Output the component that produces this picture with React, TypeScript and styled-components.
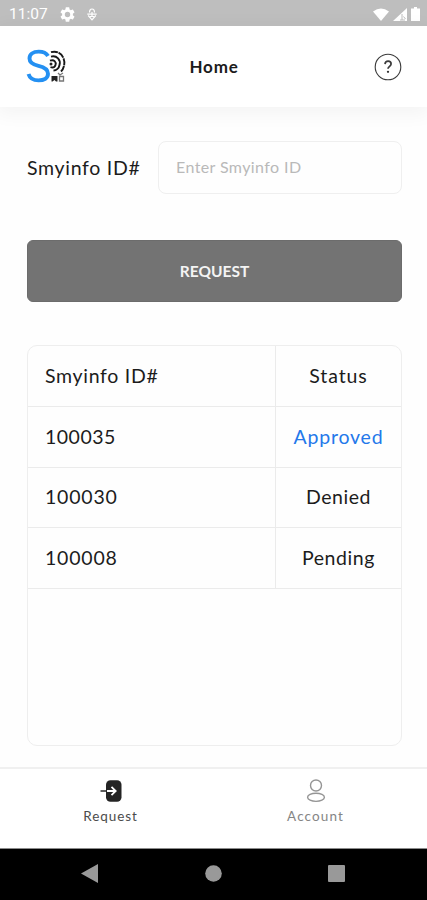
import React from "react";
import styled, { createGlobalStyle } from "styled-components";

const GlobalStyle = createGlobalStyle`
  * { box-sizing: border-box; }
  body { margin: 0; background: #fefefe; }
`;

const Screen = styled.div`
  width: 427px;
  height: 900px;
  display: flex;
  flex-direction: column;
  overflow: hidden;
  background: #fefefe;
  color: #1c1c1c;
  font-family: Lato, "Open Sans", sans-serif;
`;

const StatusBar = styled.div`
  height: 26px;
  flex: none;
  display: flex;
  align-items: center;
  justify-content: space-between;
  padding: 2px 7px 0 9px;
  background: #bebebe;
  color: #fff;
  font: 400 15.5px/24px Roboto, sans-serif;
`;

const StatusGroup = styled.div<{ $gap: number }>`
  display: flex;
  align-items: center;
  gap: ${(p) => p.$gap}px;
  svg { display: block; }
`;

const Header = styled.header`
  height: 81px;
  flex: none;
  display: grid;
  grid-template-columns: 1fr auto 1fr;
  align-items: center;
  padding: 0 25px 0 26px;
  background: #fff;
  box-shadow: 0 4px 18px 3px rgba(0, 0, 0, 0.045);
  svg { display: block; }
`;

const Title = styled.h1`
  margin: 0;
  font-size: 17px;
  line-height: 24px;
  font-weight: 700;
  letter-spacing: 0.8px;
`;

const HelpButton = styled.button`
  justify-self: end;
  border: 0;
  padding: 0;
  background: none;
`;

const Main = styled.main`
  flex: 1;
  display: flex;
  flex-direction: column;
  padding: 34px 25px 21px 27px;
`;

const Field = styled.label`
  display: flex;
  align-items: center;
  justify-content: space-between;
  height: 53px;
`;

const Text = styled.span<{ $spacing?: number; $blue?: boolean }>`
  font-size: 19.5px;
  line-height: 26px;
  white-space: nowrap;
  letter-spacing: ${(p) => p.$spacing ?? 0.5}px;
  color: ${(p) => (p.$blue ? "#2478ea" : "inherit")};
`;

const Input = styled.input`
  width: 244px;
  height: 53px;
  padding: 0 17px 2px;
  border: 1.5px solid #efefef;
  border-radius: 8px;
  background: #fefefe;
  outline: none;
  font: 400 16px Lato, sans-serif;
  letter-spacing: 0.4px;
  &::placeholder { color: #b9b9b9; opacity: 1; }
`;

const RequestButton = styled.button`
  height: 62px;
  margin-top: 46px;
  border: 1px solid #6c6c6c;
  border-radius: 6px;
  background: #737373;
  color: #f4f4f4;
  font: 700 15.5px Lato, sans-serif;
  letter-spacing: 0;
`;

const Table = styled.div`
  flex: 1;
  margin-top: 43px;
  border: 1.5px solid #eeeeee;
  border-radius: 10px;
`;

const Row = styled.div`
  display: grid;
  grid-template-columns: 247px 1fr;
  height: 60.75px;
  border-bottom: 1.5px solid #ebebeb;
`;

const Cell = styled.div<{ $status?: boolean }>`
  display: flex;
  align-items: center;
  justify-content: ${(p) => (p.$status ? "center" : "flex-start")};
  padding-left: ${(p) => (p.$status ? 0 : 17)}px;
  border-left: ${(p) => (p.$status ? "1.5px solid #ebebeb" : "0")};
`;

const Tabs = styled.nav`
  height: 81px;
  flex: none;
  display: grid;
  grid-template-columns: 221px 189px;
  border-top: 2px solid #f0f0f0;
  background: #fff;
`;

const Tab = styled.div<{ $active?: boolean; $spacing: number }>`
  display: flex;
  flex-direction: column;
  align-items: center;
  padding-top: 9px;
  gap: 3px;
  color: ${(p) => (p.$active ? "#4b4b4b" : "#858585")};
  font-size: 13.5px;
  line-height: 18px;
  letter-spacing: ${(p) => p.$spacing}px;
`;

const SystemNav = styled.div`
  height: 52px;
  flex: none;
  display: flex;
  align-items: center;
  justify-content: space-between;
  padding: 0 82px 2px 81px;
  border-top: 1px solid #8b8b8b;
  background: #000;
`;

const Logo = () => (
  <svg width="40" height="38" viewBox="0 0 40 38" fill="none">
    <path d="M22 8C20 4.5 17 3.6 12.7 3.6C7 3.6 3.5 6.4 3.5 10.5C3.5 15 7 16.6 12.5 17.8C18.5 19.1 22 21 22 25.8C22 30.2 18 32.4 12.5 32.4C7.2 32.4 3.8 30.4 2.5 26" stroke="#2490f2" strokeWidth="3.9" />
    <g stroke="#171717" strokeWidth="1.9">
      <path d="M25 4.2C34 1.5 40 10 38 18C37.5 20 36.5 22 35 23.5" strokeDasharray="7 .7" />
      <path d="M25 8.6C31 7.2 35 12 33.5 17C33 20 30.5 22.5 27.5 22.5" />
      <path d="M24 12.7C28 11 30.5 14 29.5 17C28.8 19 27 20 24.5 19.2" />
    </g>
    <circle cx="25" cy="16" r="1.5" fill="#222" />
    <path d="M25.5 28H31.5V33.5H30L28.5 32L26.5 33.5H25.5Z" fill="#222" />
    <path d="M32 25l2 2 3-2M33.5 28.5h4v4.5h-4z" stroke="#777" strokeWidth="1.3" />
  </svg>
);

const HelpIcon = () => (
  <svg width="28" height="28" viewBox="0 0 28 28" fill="none" stroke="#3b3b3b">
    <circle cx="14" cy="14" r="12.8" strokeWidth="1.1" />
    <path d="M11 11.1C11.2 9.1 12.4 8.2 14.1 8.2C15.9 8.2 17.1 9.3 17.1 10.9C17.1 13.2 14 13.4 14 15.8" strokeWidth="1.7" />
    <circle cx="14" cy="18.8" r="1.15" fill="#333" stroke="none" />
  </svg>
);

const GearIcon = () => (
  <svg width="15" height="15" viewBox="2 2 20 20" fill="#fff">
    <path d="M19.14 12.94c.04-.3.06-.61.06-.94s-.02-.64-.07-.94l2.03-1.58a.5.5 0 0 0 .12-.61l-1.92-3.32a.5.5 0 0 0-.59-.22l-2.39.96a7 7 0 0 0-1.62-.94l-.36-2.54a.5.5 0 0 0-.48-.41h-3.84a.5.5 0 0 0-.47.41l-.36 2.54a7 7 0 0 0-1.62.94l-2.39-.96a.5.5 0 0 0-.59.22L2.74 8.87a.5.5 0 0 0 .12.61l2.03 1.58a6 6 0 0 0 0 1.88l-2.03 1.58a.5.5 0 0 0-.12.61l1.92 3.32c.12.22.37.29.59.22l2.39-.96c.5.38 1.03.7 1.62.94l.36 2.54c.05.24.24.41.48.41h3.84c.24 0 .44-.17.47-.41l.36-2.54a7 7 0 0 0 1.62-.94l2.39.96c.22.08.47 0 .59-.22l1.92-3.32a.5.5 0 0 0-.12-.61zM12 15.6a3.6 3.6 0 1 1 0-7.2 3.6 3.6 0 0 1 0 7.2z" />
  </svg>
);

const records = [
  { id: "100035", status: "Approved", idSpacing: 0.5, spacing: 0.8 },
  { id: "100030", status: "Denied", idSpacing: 0.8, spacing: 0.5 },
  { id: "100008", status: "Pending", idSpacing: 0.8, spacing: 0.6 },
];

export default function App() {
  return (
    <Screen>
      <GlobalStyle />
      <StatusBar>
        <StatusGroup $gap={12}>
          <span>11:07</span>
          <GearIcon />
          <svg width="10" height="13" viewBox="0 0 10 13" fill="none" stroke="#fff" strokeWidth="1.2">
            <path d="M2.5 4.5C2.5 2.5 3.5 1 5 1S7.5 2.5 7.5 4.5M.3 6.2h9.4M1.2 7.5L5 11.8L8.8 7.5M5 4v4.5M3 8.5h4" />
          </svg>
        </StatusGroup>
        <StatusGroup $gap={4}>
          <svg width="16" height="13" viewBox="0 0 16 13"><path d="M0 3.5Q8-2.5 16 3.5L8 13Z" fill="#fff" /></svg>
          <svg width="14" height="13" viewBox="0 0 14 13">
            <path d="M0 13L14 0V13Z" fill="#fff" />
            <path d="M9 6v6M7 12h5M10.5 8.5l2 2.5" stroke="#bebebe" strokeWidth="1" />
          </svg>
          <svg width="9" height="14" viewBox="0 0 9 14"><path d="M3 0h3v1.5h3V14H0V1.5h3z" fill="#fff" /></svg>
        </StatusGroup>
      </StatusBar>
      <Header>
        <Logo />
        <Title>Home</Title>
        <HelpButton aria-label="Help"><HelpIcon /></HelpButton>
      </Header>
      <Main>
        <Field>
          <Text $spacing={0.7}>Smyinfo ID#</Text>
          <Input placeholder="Enter Smyinfo ID" />
        </Field>
        <RequestButton>REQUEST</RequestButton>
        <Table>
          <Row>
            <Cell><Text $spacing={0.7}>Smyinfo ID#</Text></Cell>
            <Cell $status><Text $spacing={0.9}>Status</Text></Cell>
          </Row>
          {records.map((r) => (
            <Row key={r.id}>
              <Cell><Text $spacing={r.idSpacing}>{r.id}</Text></Cell>
              <Cell $status><Text $spacing={r.spacing} $blue={r.status === "Approved"}>{r.status}</Text></Cell>
            </Row>
          ))}
        </Table>
      </Main>
      <Tabs>
        <Tab $active $spacing={0.9}>
          <svg width="24" height="26" viewBox="0 0 24 26" fill="none">
            <rect x="7" y="2.2" width="15.5" height="21.5" rx="4.5" fill="#242424" />
            <path d="M1.5 13h6" stroke="#333" strokeWidth="1.6" />
            <path d="M8 13h8M12.5 8.8L16.7 13L12.5 17.2" stroke="#fff" strokeWidth="1.8" />
          </svg>
          Request
        </Tab>
        <Tab $spacing={1.1}>
          <svg width="24" height="26" viewBox="0 0 24 26" fill="none" stroke="#959595" strokeWidth="1.4">
            <circle cx="12" cy="7.5" r="5.5" />
            <ellipse cx="12" cy="19.3" rx="8.4" ry="4.1" />
          </svg>
          Account
        </Tab>
      </Tabs>
      <SystemNav>
        <svg width="17" height="19" viewBox="0 0 17 19"><path d="M0 9.5L17 0V19Z" fill="#999" /></svg>
        <svg width="17" height="17" viewBox="0 0 17 17"><circle cx="8.5" cy="8.5" r="8.3" fill="#999" /></svg>
        <svg width="17" height="17" viewBox="0 0 17 17"><rect width="17" height="17" rx="1" fill="#999" /></svg>
      </SystemNav>
    </Screen>
  );
}
